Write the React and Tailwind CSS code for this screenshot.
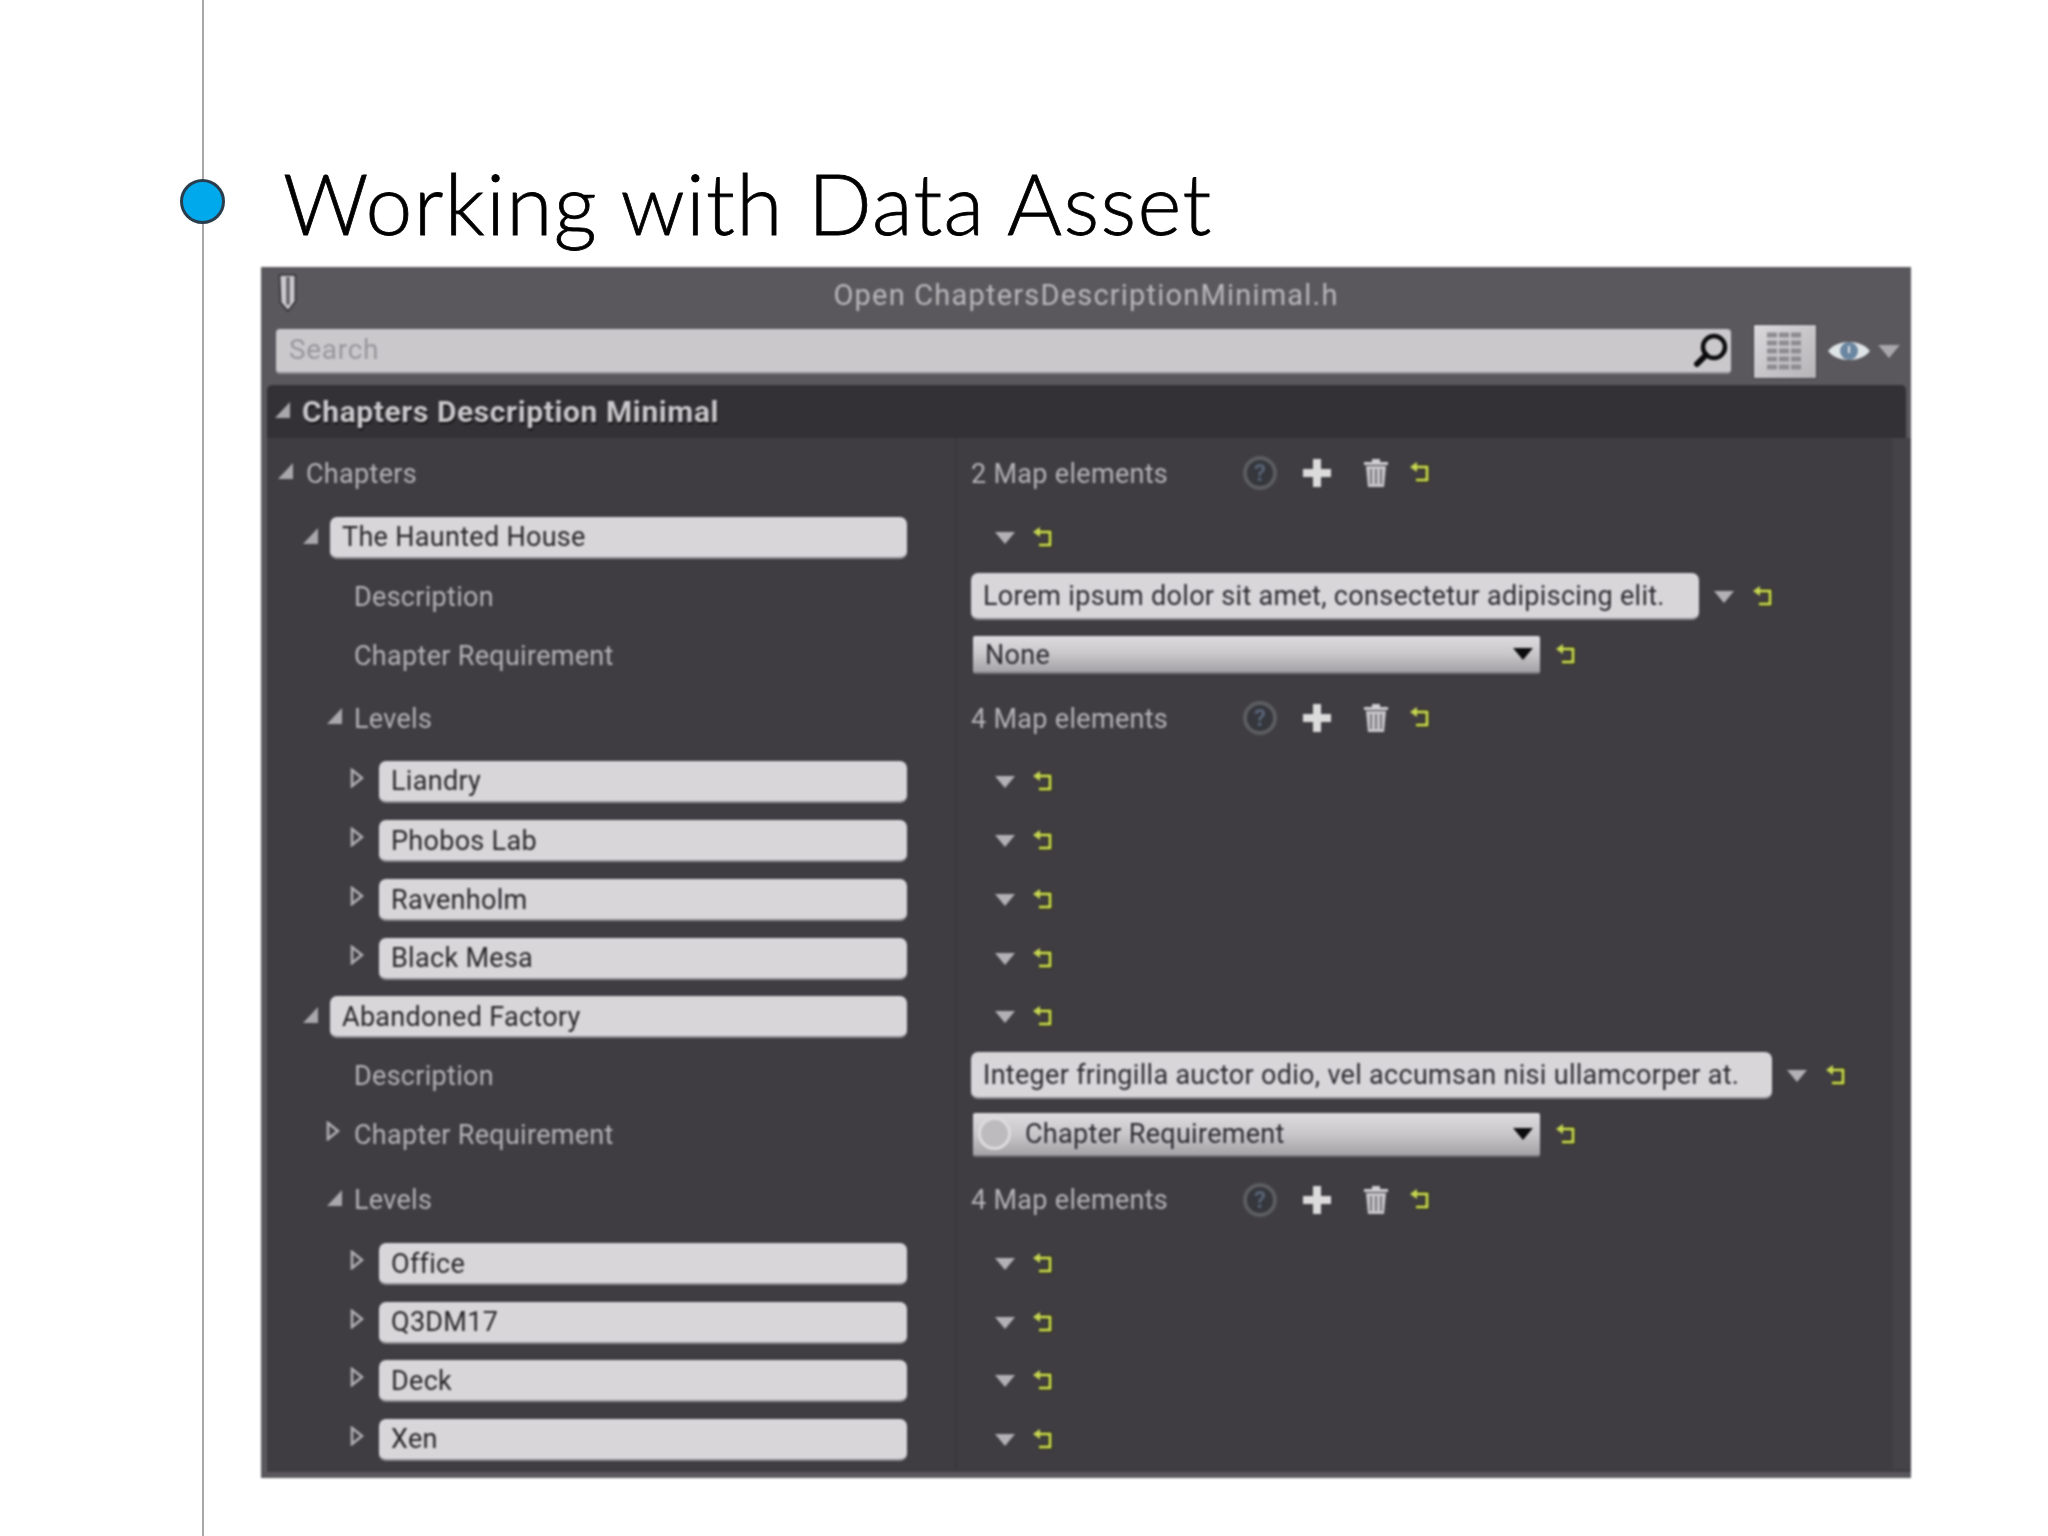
import React from "react";

function OpenArrow() {
  return (
    <svg width="17" height="18" viewBox="0 0 17 18" className="-mt-1 block">
      <path d="M16 1v16H1z" fill="#a9a7aa" />
    </svg>
  );
}

function ClosedArrow() {
  return (
    <svg width="14" height="20" viewBox="0 0 14 20" className="-mt-2 block">
      <path d="M2 2l10 8-10 8z" fill="none" stroke="#b0aeb2" strokeWidth="2.6" />
    </svg>
  );
}

function DownArrow({ color = "#b2b0b4", w = 20, h = 12 }) {
  return (
    <svg width={w} height={h} viewBox="0 0 20 12" className="block">
      <path d="M0 0h20L10 12z" fill={color} />
    </svg>
  );
}

function ResetIcon({ className = "" }) {
  return (
    <svg width="20" height="22" viewBox="0 0 20 22" className={`block shrink-0 ${className}`}>
      <path d="M6 5h11v13H6" fill="none" stroke="#23220f" strokeWidth="5" />
      <path d="M6 5h11v13H6" fill="none" stroke="#c6d651" strokeWidth="3" />
      <path d="M0 5l7-5v10z" fill="#c6d651" />
    </svg>
  );
}

function MapHeader({ count }) {
  return (
    <div className="flex items-center pl-[14px]">
      <span className="w-[272px] pt-[2px] text-[#b4b2b5]">{count} Map elements</span>
      <span className="flex h-[34px] w-[34px] items-center justify-center rounded-full border-[4px] border-[#5b5d61] bg-[#35373d] text-[24px] font-bold leading-none tracking-normal text-[#566274]">
        ?
      </span>
      <svg width="28" height="28" viewBox="0 0 28 28" className="ml-[26px] block">
        <path d="M10 0h8v10h10v8H18v10h-8V18H0v-8h10z" fill="#dcdbdc" />
      </svg>
      <svg width="26" height="30" viewBox="0 0 26 30" className="ml-[32px] block">
        <path d="M1 4h24v3H1zM9 1h8v3H9z" fill="#cfcdd0" />
        <path d="M3 8h20l-2 21H5z" fill="#c8c6c9" />
        <path d="M8 11v15M13 11v15M18 11v15" stroke="#7a787c" strokeWidth="2" />
      </svg>
      <ResetIcon className="ml-[21px]" />
    </div>
  );
}

function MapValue() {
  return (
    <div className="flex items-center pl-[38px]">
      <DownArrow />
      <ResetIcon className="ml-[18px]" />
    </div>
  );
}

function KeyBox({ width, children }) {
  return (
    <div className={`flex h-[42px] items-center rounded-[7px] border-b-2 border-[#8f8d90] bg-[#d8d6d9] pl-[12px] pt-[2px] text-[#29272a] ${width}`}>
      {children}
    </div>
  );
}

function TextValue({ width, children }) {
  return (
    <div className="flex items-center pl-[14px]">
      <div className={`flex h-[47px] items-center rounded-[7px] border-b-2 border-[#8f8d90] bg-[#d8d6d9] pl-[12px] pt-[2px] text-[#2d2b2f] ${width}`}>
        {children}
      </div>
      <div className="ml-[15px]">
        <DownArrow />
      </div>
      <ResetIcon className="ml-[19px]" />
    </div>
  );
}

function Dropdown({ height, children }) {
  return (
    <div className="flex items-center pl-[16px]">
      <div className={`flex w-[567px] items-center justify-between rounded-[2px] border-b-2 border-[#77757a] bg-gradient-to-b from-[#dedcdf] via-[#c9c7ca] to-[#a4a2a5] pr-[7px] text-[#2d2b2f] ${height}`}>
        <div className="flex items-center">{children}</div>
        <DownArrow color="#0c0c0e" />
      </div>
      <ResetIcon className="ml-[16px]" />
    </div>
  );
}

function Row({ height, left, right }) {
  return (
    <div className={`flex ${height}`}>
      <div className="flex w-[688px] items-center text-[#b4b2b5]">{left}</div>
      <div className="flex flex-1 items-center border-l-2 border-[#39373b]">{right}</div>
      <div className="w-[18px] bg-[#454347]" />
    </div>
  );
}

function Label({ pad, slot, arrow, children }) {
  return (
    <div className={`flex items-center ${pad}`}>
      {arrow && <div className={slot}>{arrow}</div>}
      <span className="pt-[2px]">{children}</span>
    </div>
  );
}

function Chapter({ height, name }) {
  return (
    <Row
      height={height}
      left={
        <div className="flex items-center pl-[35px]">
          <div className="w-[28px]">
            <OpenArrow />
          </div>
          <KeyBox width="w-[577px]">{name}</KeyBox>
        </div>
      }
      right={<MapValue />}
    />
  );
}

function Level({ height, name }) {
  return (
    <Row
      height={height}
      left={
        <div className="flex items-center pl-[83px]">
          <div className="w-[29px]">
            <ClosedArrow />
          </div>
          <KeyBox width="w-[528px]">{name}</KeyBox>
        </div>
      }
      right={<MapValue />}
    />
  );
}

export default function App() {
  return (
    <div className="relative h-[1536px] w-[2048px] overflow-hidden bg-white font-['Roboto',sans-serif]">
      {/* slide decoration */}
      <div className="absolute left-[202px] top-0 h-full w-[2px] bg-[#a8a8a8]" />
      <div className="absolute left-[180px] top-[179px] h-[45px] w-[45px] rounded-full border-[3px] border-[#2a3d4d] bg-[#00a9ec]" />

      <div className="relative h-[267px] pl-[283px] pt-[155px]">
        <h1 className="font-['Lato',sans-serif] text-[84px] font-light leading-[96px] tracking-[1.36px] text-black [-webkit-text-stroke:0.8px_black]">Working with Data Asset</h1>
      </div>

      <div className="relative ml-[261px] flex h-[1211px] w-[1650px] flex-col bg-[#5a585c] blur-[0.8px]">
        <div className="relative flex h-[57px] items-center justify-center text-[29px] tracking-[1.2px] text-[#b9b7ba]">
          <svg width="24" height="38" viewBox="0 0 22 36" className="absolute left-[15px] top-[7px]">
            <path d="M3 1h15v25l-7 9-7-8z" fill="#c9c7ca" stroke="#2e2c30" strokeWidth="1.5" />
            <path d="M11 3v26" stroke="#5a585c" strokeWidth="3" />
          </svg>
          <span>Open ChaptersDescriptionMinimal.h</span>
        </div>

        <div className="flex h-[54px] items-center pl-[15px] text-[28px]">
          <div className="flex h-[45px] w-[1455px] items-center justify-between rounded-[4px] border-b-2 border-[#8f8d90] bg-[#cac8cb] pl-[13px] pr-[2px] tracking-[0.7px] text-[#98969a]">
            <span>Search</span>
            <svg width="36" height="36" viewBox="0 0 36 36" className="block">
              <circle cx="21" cy="15" r="11" fill="none" stroke="#0c0c0e" strokeWidth="4.5" />
              <path d="M13 23l-9 9" stroke="#0c0c0e" strokeWidth="6" strokeLinecap="round" />
            </svg>
          </div>
          <div className="ml-[22px] flex h-[55px] w-[64px] items-center justify-center border border-[#3f3d41] bg-gradient-to-br from-[#dad8db] to-[#b6b4b7]">
            <svg width="36" height="38" viewBox="0 0 36 38" className="block">
              <path
                d="M0 3h36M0 11h36M0 19h36M0 27h36M0 35h36"
                stroke="#8d8b8f"
                strokeWidth="5"
                strokeDasharray="10 2"
              />
            </svg>
          </div>
          <svg width="44" height="26" viewBox="0 0 44 26" className="ml-[10px] block">
            <path d="M1 13C10 1 34 1 43 13 34 25 10 25 1 13z" fill="#dfe4e7" />
            <circle cx="22" cy="13" r="9" fill="#6a86a0" />
            <path d="M22 8v7" stroke="#dfe4e7" strokeWidth="2" />
          </svg>
          <div className="ml-[7px]">
            <DownArrow color="#a9a7aa" w={22} h={13} />
          </div>
        </div>

        <div className="ml-[6px] mt-[7px] flex flex-col text-[27px] leading-none tracking-[0.3px]">
          <div className="mr-[5px] flex h-[53px] items-center rounded-t-[5px] bg-[#333135] pl-[7px] text-[30px] font-bold text-[#c9c7ca]">
            <div className="w-[28px]">
              <OpenArrow />
            </div>
            <span className="tracking-[0.6px] [text-shadow:1px_2px_1px_#111]">Chapters Description Minimal</span>
          </div>

          <div className="flex flex-col bg-[#3f3d41]">
            <Row height="h-[70px]" left={<Label pad="pl-[10px]" slot="w-[29px]" arrow={<OpenArrow />}>Chapters</Label>} right={<MapHeader count={2} />} />
            <Chapter height="h-[59px]" name="The Haunted House" />
            <Row
              height="h-[59px]"
              left={<Label pad="pl-[87px]">Description</Label>}
              right={<TextValue width="w-[728px]">Lorem ipsum dolor sit amet, consectetur adipiscing elit.</TextValue>}
            />
            <Row height="h-[58px]" left={<Label pad="pl-[87px]">Chapter Requirement</Label>} right={<Dropdown height="h-[38px]"><span className="pl-[12px] pt-[2px]">None</span></Dropdown>} />
            <Row height="h-[68px]" left={<Label pad="pl-[59px]" slot="w-[28px]" arrow={<OpenArrow />}>Levels</Label>} right={<MapHeader count={4} />} />
            <Level height="h-[59px]" name="Liandry" />
            <Level height="h-[60px]" name="Phobos Lab" />
            <Level height="h-[58px]" name="Ravenholm" />
            <Level height="h-[59px]" name="Black Mesa" />
            <Chapter height="h-[58px]" name="Abandoned Factory" />
            <Row
              height="h-[59px]"
              left={<Label pad="pl-[87px]">Description</Label>}
              right={<TextValue width="w-[801px]">Integer fringilla auctor odio, vel accumsan nisi ullamcorper at.</TextValue>}
            />
            <Row
              height="h-[59px]"
              left={<Label pad="pl-[59px]" slot="w-[28px]" arrow={<ClosedArrow />}>Chapter Requirement</Label>}
              right={
                <Dropdown height="h-[44px]">
                  <span className="ml-[5px] h-[33px] w-[33px] rounded-full border-[3px] border-[#dddbde] bg-[#bdbbbe]" />
                  <span className="pl-[14px] pt-[2px]">Chapter Requirement</span>
                </Dropdown>
              }
            />
            <Row height="h-[71px]" left={<Label pad="pl-[59px]" slot="w-[28px]" arrow={<OpenArrow />}>Levels</Label>} right={<MapHeader count={4} />} />
            <Level height="h-[58px]" name="Office" />
            <Level height="h-[59px]" name="Q3DM17" />
            <Level height="h-[58px]" name="Deck" />
            <Level height="h-[59px]" name="Xen" />
            <div className="h-[3px]" />
          </div>
        </div>
      </div>
    </div>
  );
}
